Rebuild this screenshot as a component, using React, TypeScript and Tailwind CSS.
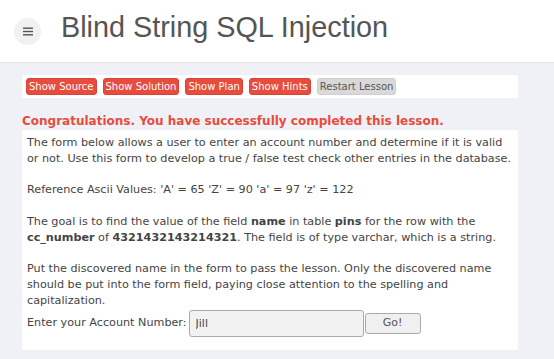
export default function App() {
  const btn =
    "h-[17px] px-[2px] rounded-[3px] text-[10px] leading-[15px] text-white bg-[#e74c3c] border border-[#d9433a]";
  return (
    <div className="w-[554px] h-[359px] bg-[#f0f1f6] font-['DejaVu_Sans',sans-serif] overflow-hidden">
      {/* Header */}
      <header className="h-[63px] bg-white border-b border-[#e3e4e8] flex items-center">
        <button className="ml-[14px] w-[27px] h-[27px] rounded-full bg-[#f1f1f1] flex items-center justify-center">
          <svg width="10" height="9" viewBox="0 0 10 9">
            <rect x="0" y="0.5" width="10" height="1.4" fill="#555" />
            <rect x="0" y="3.8" width="10" height="1.4" fill="#555" />
            <rect x="0" y="7.1" width="10" height="1.4" fill="#555" />
          </svg>
        </button>
        <h1 className="ml-[20px] -mt-[7px] font-['Liberation_Sans',Arial,sans-serif] text-[28.8px] text-[#555]">
          Blind String SQL Injection
        </h1>
      </header>

      <div className="px-[22px] pt-[12px] w-[496px] box-content">
        {/* Lesson buttons */}
        <div className="bg-white rounded-[2px] h-[23px] flex items-center gap-[6px] px-[4px]">
          <button className={btn}>Show Source</button>
          <button className={btn}>Show Solution</button>
          <button className={btn}>Show Plan</button>
          <button className={btn}>Show Hints</button>
          <button className="h-[17px] px-[2px] rounded-[3px] text-[10px] leading-[15px] text-[#555] bg-[#d9d9d9] border border-[#d0d0d0]">
            Restart Lesson
          </button>
        </div>

        <div className="mt-[16px] text-[12px] font-bold text-[#e74c3c] leading-[15px]">
          Congratulations. You have successfully completed this lesson.
        </div>

        {/* Lesson content */}
        <div className="mt-[1px] bg-white rounded-[2px] px-[5px] pt-[5px] pb-[13px] text-[11.2px] leading-[15.8px] text-[#444]">
          <p>
            The form below allows a user to enter an account number and determine if it is valid or not. Use this form
            to develop a true / false test check other entries in the database.
          </p>
          <p className="mt-[15.8px]">Reference Ascii Values: 'A' = 65 'Z' = 90 'a' = 97 'z' = 122</p>
          <p className="mt-[15.8px]">
            The goal is to find the value of the field <b>name</b> in table <b>pins</b> for the row with the{" "}
            <b>cc_number</b> of <b>4321432143214321</b>. The field is of type varchar, which is a string.
          </p>
          <p className="mt-[15.8px]">
            Put the discovered name in the form to pass the lesson. Only the discovered name should be put into the form
            field, paying close attention to the spelling and capitalization.
          </p>
          <div className="flex items-center mt-[1px]">
            <span>Enter your Account Number:</span>
            <input
              defaultValue="Jill"
              className="ml-[2px] w-[175px] h-[27px] px-[6px] rounded-[3px] border border-[#aaa] bg-[#f2f2f2] text-[11px] text-[#444]"
            />
            <button className="ml-[1px] w-[56px] h-[21px] rounded-[3px] border border-[#aaa] bg-[#f0f0f0] text-[11px] text-[#555]">
              Go!
            </button>
          </div>
        </div>
      </div>
    </div>
  );
}
